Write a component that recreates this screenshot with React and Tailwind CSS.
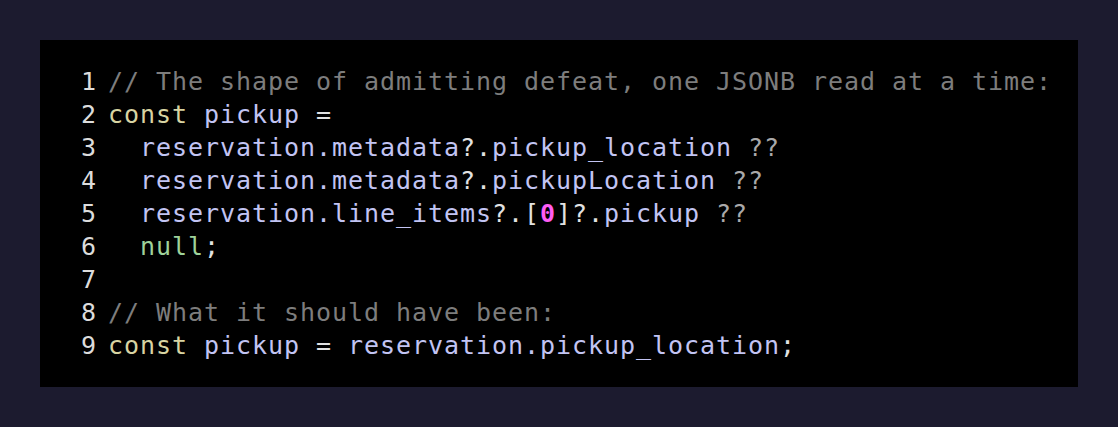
const C = {
  com: 'text-[#7d7d7d]',
  kw: 'text-[#d8d4a2]',
  id: 'text-[#c2c4f3]',
  op: 'text-[#a9a9a9]',
  pun: 'text-[#e2e2e2]',
  nul: 'text-[#9ed29a]',
  num: 'text-[#ff5cf2] font-bold',
};

const lines = [
  [['com', '// The shape of admitting defeat, one JSONB read at a time:']],
  [['kw', 'const'], ['pun', ' '], ['id', 'pickup'], ['pun', ' =']],
  [['pun', '  '], ['id', 'reservation.metadata'], ['pun', '?.'], ['id', 'pickup_location'], ['op', ' ??']],
  [['pun', '  '], ['id', 'reservation.metadata'], ['pun', '?.'], ['id', 'pickupLocation'], ['op', ' ??']],
  [['pun', '  '], ['id', 'reservation.line_items'], ['pun', '?.['], ['num', '0'], ['pun', ']?.'], ['id', 'pickup'], ['op', ' ??']],
  [['pun', '  '], ['nul', 'null'], ['pun', ';']],
  [],
  [['com', '// What it should have been:']],
  [['kw', 'const'], ['pun', ' '], ['id', 'pickup'], ['pun', ' = '], ['id', 'reservation.pickup_location'], ['pun', ';']],
];

export default function App() {
  return (
    <div className="w-[1118px] h-[427px] bg-[#1c1b2f] p-10">
      <div className="w-full h-full bg-black pt-[25px] pb-[24px] pl-[41px] font-['DejaVu_Sans_Mono',monospace] text-[25px] leading-[33px] tracking-[0.95px]">
        {lines.map((parts, i) => (
          <div key={i} className="flex whitespace-pre">
            <span className="w-[16px] mr-[11px] text-right text-[#dcdcdc]">{i + 1}</span>
            <span>
              {parts.map(([k, t], j) => (
                <span key={j} className={C[k]}>{t}</span>
              ))}
            </span>
          </div>
        ))}
      </div>
    </div>
  );
}
